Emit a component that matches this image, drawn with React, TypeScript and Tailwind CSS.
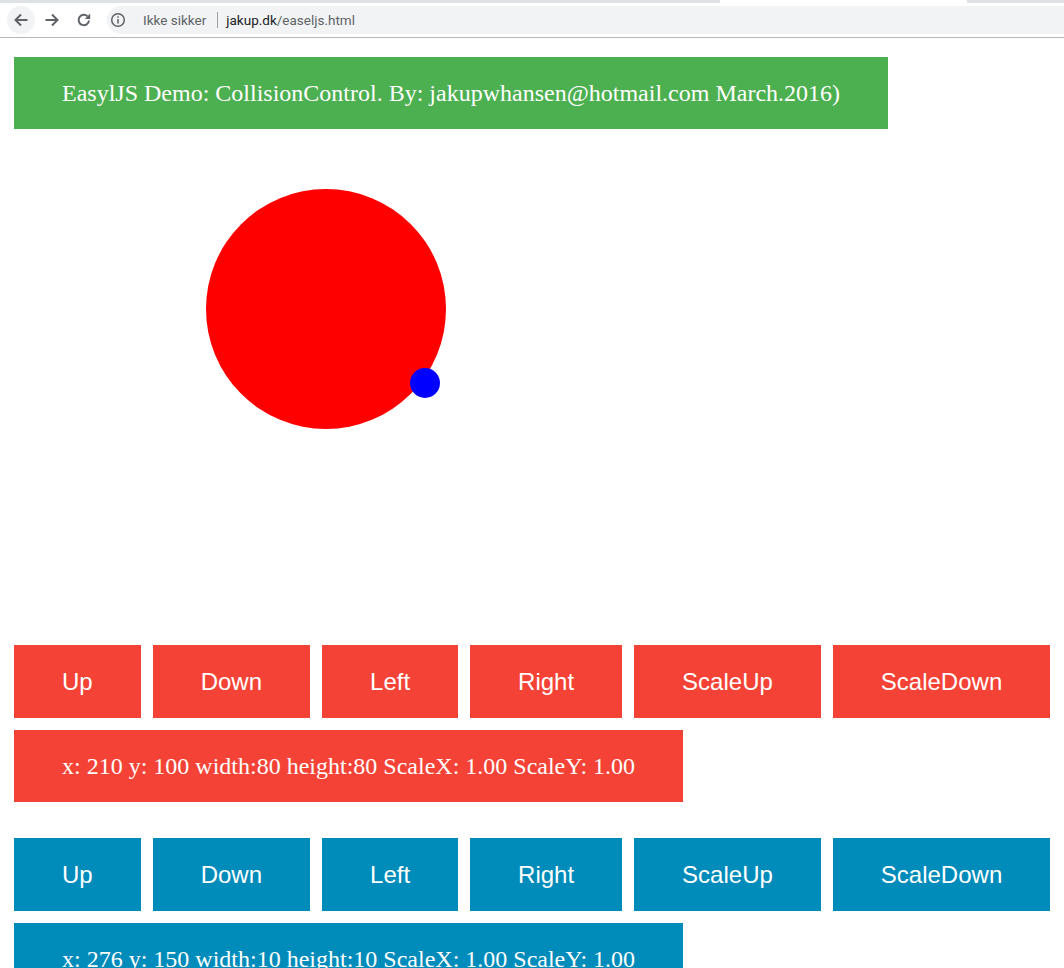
import React from "react";

const serif = { fontFamily: '"Liberation Serif", "Times New Roman", serif' };
const sans = { fontFamily: '"Liberation Sans", Arial, sans-serif' };

function BrowserChrome() {
  return (
    <div className="relative h-[38px] w-full bg-white" style={{ fontFamily: 'Roboto, "Noto Sans", sans-serif' }}>
      <div className="flex h-[3px] w-full bg-[#dee1e6]">
        <div className="ml-[720px] h-full w-[247px] bg-white" />
      </div>
      <div className="flex h-[35px] items-center border-b border-[#b8b8b8]">
        <div className="ml-[7px] flex h-[28px] w-[28px] items-center justify-center rounded-full bg-[#f1f3f4]">
          <svg width="16" height="16" viewBox="0 0 16 16" fill="none" stroke="#5f6368" strokeWidth="2">
            <path d="M14.5 8H2.5M8 2.5L2.5 8L8 13.5" />
          </svg>
        </div>
        <div className="ml-[3px] flex h-[28px] w-[28px] items-center justify-center">
          <svg width="16" height="16" viewBox="0 0 16 16" fill="none" stroke="#5f6368" strokeWidth="2">
            <path d="M1.5 8H13.5M8 2.5L13.5 8L8 13.5" />
          </svg>
        </div>
        <div className="ml-[4px] flex h-[28px] w-[28px] items-center justify-center">
          <svg width="16" height="16" viewBox="0 0 16 16" fill="none" stroke="#5f6368" strokeWidth="2">
            <path d="M13 8.5A5.2 5.2 0 1 1 11.4 4.2" />
            <path d="M14.2 1.6V7H8.8Z" fill="#5f6368" stroke="none" />
          </svg>
        </div>
        <div className="ml-[9px] flex h-[28px] flex-1 items-center rounded-l-full bg-[#f1f3f4] pl-[1px]">
          <div className="flex h-[20px] w-[20px] items-center justify-center">
            <svg width="16" height="16" viewBox="0 0 16 16" fill="none">
              <circle cx="8" cy="8" r="6.3" stroke="#5f6368" strokeWidth="1.5" />
              <rect x="7.25" y="7" width="1.5" height="4.5" fill="#5f6368" />
              <rect x="7.25" y="4.3" width="1.5" height="1.5" fill="#5f6368" />
            </svg>
          </div>
          <span className="ml-[15px] text-[13.5px] text-[#5f6368]">Ikke sikker</span>
          <span className="ml-[11px] h-[16px] w-px bg-[#9aa0a6]" />
          <span className="ml-[8px] text-[13.5px] text-[#202124]">
            jakup.dk<span className="text-[#5f6368]">/easeljs.html</span>
          </span>
        </div>
      </div>
    </div>
  );
}

function ButtonRow({ color }: { color: string }) {
  const labels = ["Up", "Down", "Left", "Right", "ScaleUp", "ScaleDown"];
  return (
    <div className="flex gap-3">
      {labels.map((l) => (
        <div
          key={l}
          className={`flex h-[73px] items-center justify-center px-12 text-[24px] text-white ${color}`}
          style={sans}
        >
          {l}
        </div>
      ))}
    </div>
  );
}

export default function App() {
  return (
    <div className="min-h-[968px] w-full overflow-hidden bg-white">
      <BrowserChrome />
      <div className="pl-[14px] pt-[19px]">
        <div
          className="inline-flex h-[72px] items-center bg-[#4CAF50] px-12 text-[24px] text-white"
          style={serif}
        >
          EasylJS Demo: CollisionControl. By: jakupwhansen@hotmail.com March.2016)
        </div>
        <div className="h-[516px] w-[1036px]">
          <svg width="1036" height="516" viewBox="0 0 1036 516">
            <circle cx="312" cy="180" r="120" fill="#ff0000" />
            <circle cx="411" cy="254" r="15" fill="#0000ff" />
          </svg>
        </div>
        <ButtonRow color="bg-[#f44336]" />
        <div
          className="mt-3 inline-flex h-[72px] items-center bg-[#f44336] px-12 text-[24px] text-white"
          style={serif}
        >
          x: 210 y: 100 width:80 height:80 ScaleX: 1.00 ScaleY: 1.00
        </div>
        <div className="mt-9">
          <ButtonRow color="bg-[#008CBA]" />
        </div>
        <div
          className="mt-3 inline-flex h-[72px] items-center bg-[#008CBA] px-12 text-[24px] text-white"
          style={serif}
        >
          x: 276 y: 150 width:10 height:10 ScaleX: 1.00 ScaleY: 1.00
        </div>
      </div>
    </div>
  );
}
